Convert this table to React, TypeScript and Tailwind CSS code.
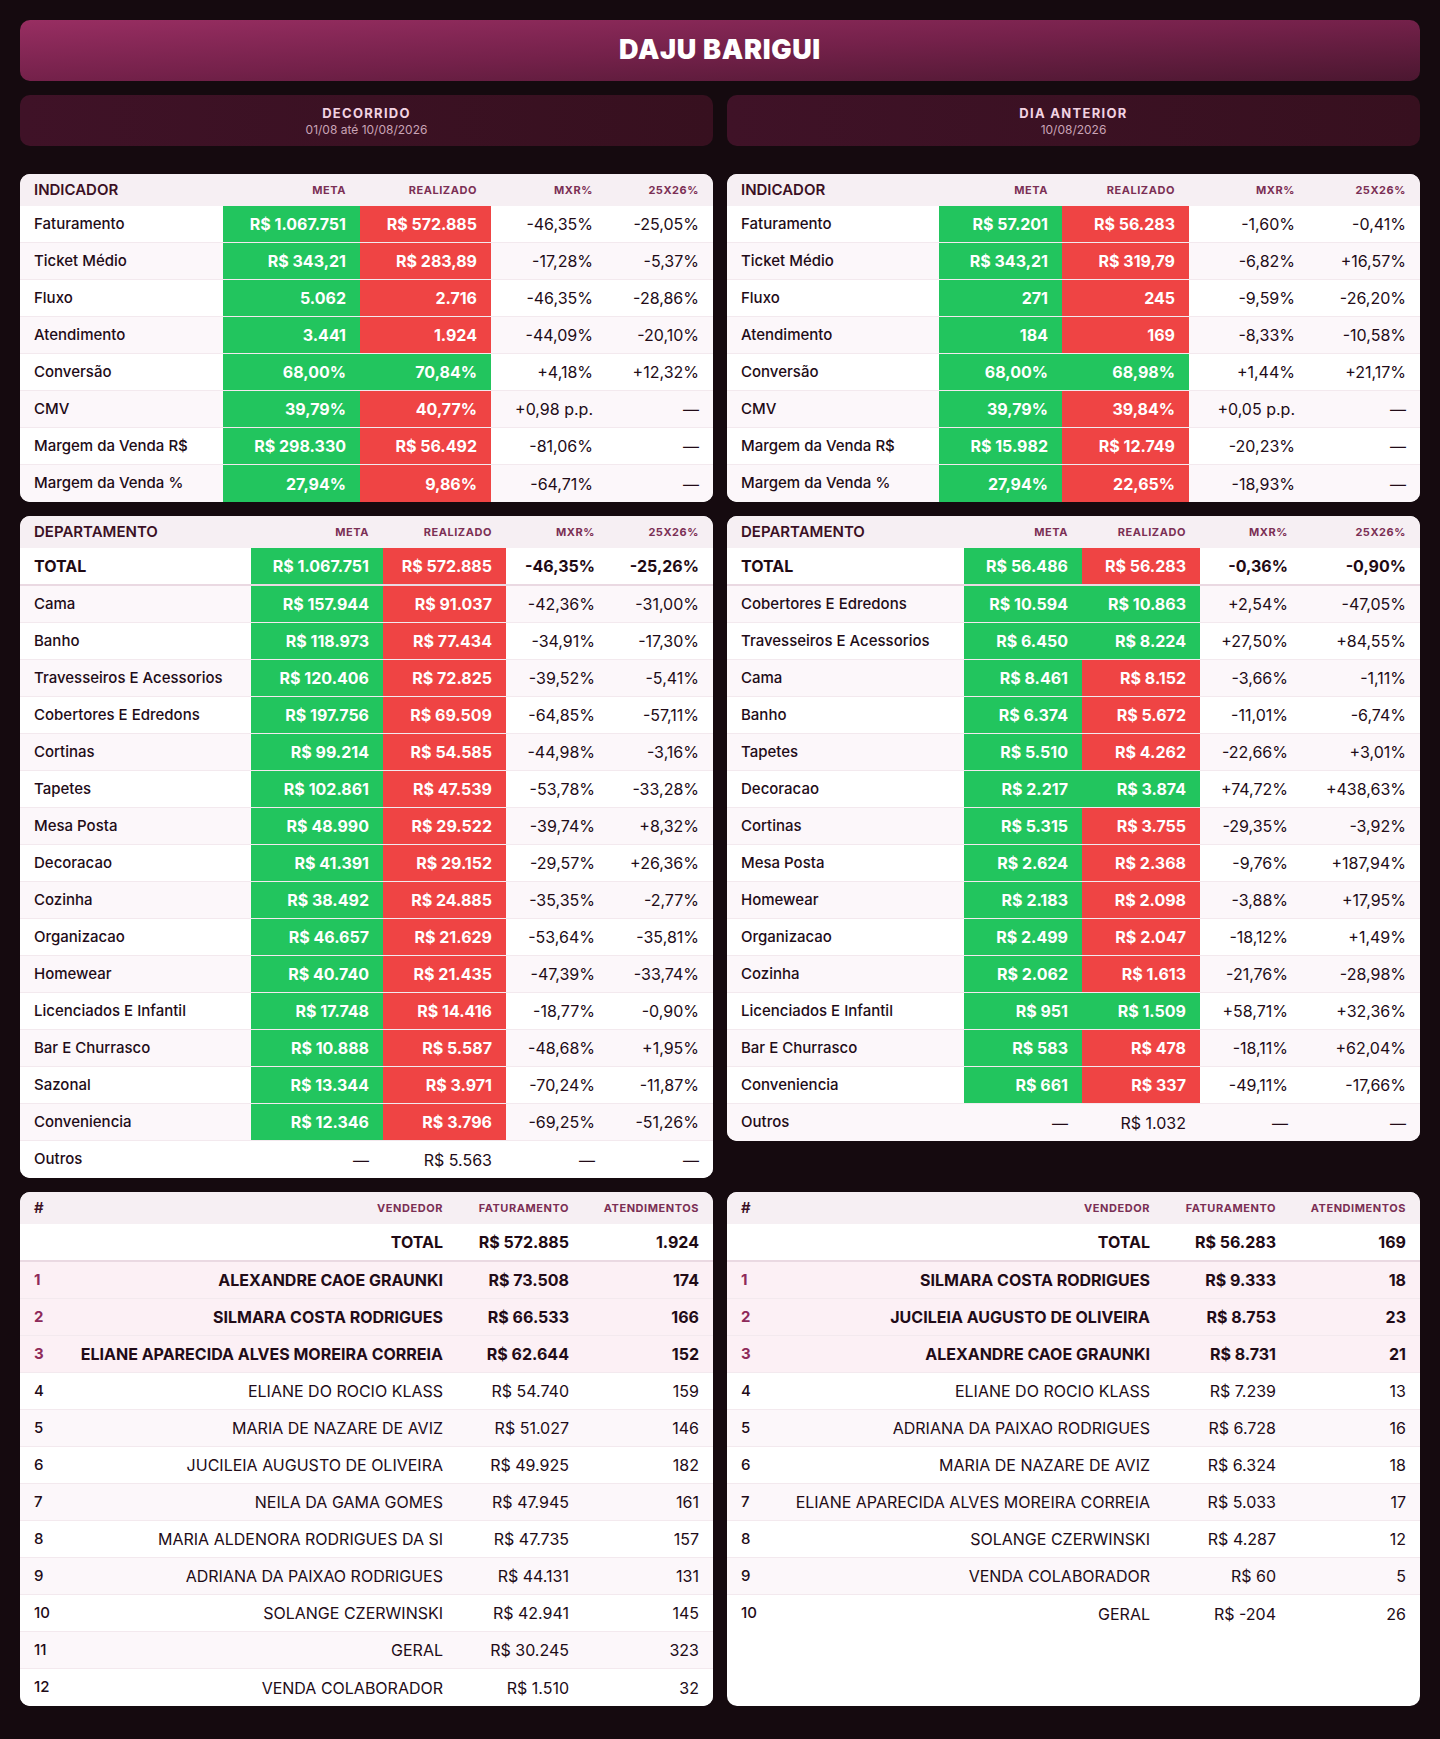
import React from 'react'

type Tone = 'g' | 'r' | null
type IndRow = { label: string; meta: string; metaTone: Tone; real: string; realTone: Tone; mxr: string; yoy: string }
type Seller = [string, string, string]

const ind = (label: string, meta: string, real: string, rt: Tone, mxr: string, yoy: string): IndRow => ({
  label,
  meta,
  metaTone: meta === '—' ? null : 'g',
  real,
  realTone: rt,
  mxr,
  yoy,
})

const leftIndicators: IndRow[] = [
  ind('Faturamento', 'R$ 1.067.751', 'R$ 572.885', 'r', '-46,35%', '-25,05%'),
  ind('Ticket Médio', 'R$ 343,21', 'R$ 283,89', 'r', '-17,28%', '-5,37%'),
  ind('Fluxo', '5.062', '2.716', 'r', '-46,35%', '-28,86%'),
  ind('Atendimento', '3.441', '1.924', 'r', '-44,09%', '-20,10%'),
  ind('Conversão', '68,00%', '70,84%', 'g', '+4,18%', '+12,32%'),
  ind('CMV', '39,79%', '40,77%', 'r', '+0,98 p.p.', '—'),
  ind('Margem da Venda R$', 'R$ 298.330', 'R$ 56.492', 'r', '-81,06%', '—'),
  ind('Margem da Venda %', '27,94%', '9,86%', 'r', '-64,71%', '—'),
]

const rightIndicators: IndRow[] = [
  ind('Faturamento', 'R$ 57.201', 'R$ 56.283', 'r', '-1,60%', '-0,41%'),
  ind('Ticket Médio', 'R$ 343,21', 'R$ 319,79', 'r', '-6,82%', '+16,57%'),
  ind('Fluxo', '271', '245', 'r', '-9,59%', '-26,20%'),
  ind('Atendimento', '184', '169', 'r', '-8,33%', '-10,58%'),
  ind('Conversão', '68,00%', '68,98%', 'g', '+1,44%', '+21,17%'),
  ind('CMV', '39,79%', '39,84%', 'r', '+0,05 p.p.', '—'),
  ind('Margem da Venda R$', 'R$ 15.982', 'R$ 12.749', 'r', '-20,23%', '—'),
  ind('Margem da Venda %', '27,94%', '22,65%', 'r', '-18,93%', '—'),
]

const leftDeps: IndRow[] = [
  ind('Cama', 'R$ 157.944', 'R$ 91.037', 'r', '-42,36%', '-31,00%'),
  ind('Banho', 'R$ 118.973', 'R$ 77.434', 'r', '-34,91%', '-17,30%'),
  ind('Travesseiros E Acessorios', 'R$ 120.406', 'R$ 72.825', 'r', '-39,52%', '-5,41%'),
  ind('Cobertores E Edredons', 'R$ 197.756', 'R$ 69.509', 'r', '-64,85%', '-57,11%'),
  ind('Cortinas', 'R$ 99.214', 'R$ 54.585', 'r', '-44,98%', '-3,16%'),
  ind('Tapetes', 'R$ 102.861', 'R$ 47.539', 'r', '-53,78%', '-33,28%'),
  ind('Mesa Posta', 'R$ 48.990', 'R$ 29.522', 'r', '-39,74%', '+8,32%'),
  ind('Decoracao', 'R$ 41.391', 'R$ 29.152', 'r', '-29,57%', '+26,36%'),
  ind('Cozinha', 'R$ 38.492', 'R$ 24.885', 'r', '-35,35%', '-2,77%'),
  ind('Organizacao', 'R$ 46.657', 'R$ 21.629', 'r', '-53,64%', '-35,81%'),
  ind('Homewear', 'R$ 40.740', 'R$ 21.435', 'r', '-47,39%', '-33,74%'),
  ind('Licenciados E Infantil', 'R$ 17.748', 'R$ 14.416', 'r', '-18,77%', '-0,90%'),
  ind('Bar E Churrasco', 'R$ 10.888', 'R$ 5.587', 'r', '-48,68%', '+1,95%'),
  ind('Sazonal', 'R$ 13.344', 'R$ 3.971', 'r', '-70,24%', '-11,87%'),
  ind('Conveniencia', 'R$ 12.346', 'R$ 3.796', 'r', '-69,25%', '-51,26%'),
  ind('Outros', '—', 'R$ 5.563', null, '—', '—'),
]

const rightDeps: IndRow[] = [
  ind('Cobertores E Edredons', 'R$ 10.594', 'R$ 10.863', 'g', '+2,54%', '-47,05%'),
  ind('Travesseiros E Acessorios', 'R$ 6.450', 'R$ 8.224', 'g', '+27,50%', '+84,55%'),
  ind('Cama', 'R$ 8.461', 'R$ 8.152', 'r', '-3,66%', '-1,11%'),
  ind('Banho', 'R$ 6.374', 'R$ 5.672', 'r', '-11,01%', '-6,74%'),
  ind('Tapetes', 'R$ 5.510', 'R$ 4.262', 'r', '-22,66%', '+3,01%'),
  ind('Decoracao', 'R$ 2.217', 'R$ 3.874', 'g', '+74,72%', '+438,63%'),
  ind('Cortinas', 'R$ 5.315', 'R$ 3.755', 'r', '-29,35%', '-3,92%'),
  ind('Mesa Posta', 'R$ 2.624', 'R$ 2.368', 'r', '-9,76%', '+187,94%'),
  ind('Homewear', 'R$ 2.183', 'R$ 2.098', 'r', '-3,88%', '+17,95%'),
  ind('Organizacao', 'R$ 2.499', 'R$ 2.047', 'r', '-18,12%', '+1,49%'),
  ind('Cozinha', 'R$ 2.062', 'R$ 1.613', 'r', '-21,76%', '-28,98%'),
  ind('Licenciados E Infantil', 'R$ 951', 'R$ 1.509', 'g', '+58,71%', '+32,36%'),
  ind('Bar E Churrasco', 'R$ 583', 'R$ 478', 'r', '-18,11%', '+62,04%'),
  ind('Conveniencia', 'R$ 661', 'R$ 337', 'r', '-49,11%', '-17,66%'),
  ind('Outros', '—', 'R$ 1.032', null, '—', '—'),
]

const leftSellers: Seller[] = [
  ['ALEXANDRE CAOE GRAUNKI', 'R$ 73.508', '174'],
  ['SILMARA COSTA RODRIGUES', 'R$ 66.533', '166'],
  ['ELIANE APARECIDA ALVES MOREIRA CORREIA', 'R$ 62.644', '152'],
  ['ELIANE DO ROCIO KLASS', 'R$ 54.740', '159'],
  ['MARIA DE NAZARE DE AVIZ', 'R$ 51.027', '146'],
  ['JUCILEIA AUGUSTO DE OLIVEIRA', 'R$ 49.925', '182'],
  ['NEILA DA GAMA GOMES', 'R$ 47.945', '161'],
  ['MARIA ALDENORA RODRIGUES DA SI', 'R$ 47.735', '157'],
  ['ADRIANA DA PAIXAO RODRIGUES', 'R$ 44.131', '131'],
  ['SOLANGE CZERWINSKI', 'R$ 42.941', '145'],
  ['GERAL', 'R$ 30.245', '323'],
  ['VENDA COLABORADOR', 'R$ 1.510', '32'],
]

const rightSellers: Seller[] = [
  ['SILMARA COSTA RODRIGUES', 'R$ 9.333', '18'],
  ['JUCILEIA AUGUSTO DE OLIVEIRA', 'R$ 8.753', '23'],
  ['ALEXANDRE CAOE GRAUNKI', 'R$ 8.731', '21'],
  ['ELIANE DO ROCIO KLASS', 'R$ 7.239', '13'],
  ['ADRIANA DA PAIXAO RODRIGUES', 'R$ 6.728', '16'],
  ['MARIA DE NAZARE DE AVIZ', 'R$ 6.324', '18'],
  ['ELIANE APARECIDA ALVES MOREIRA CORREIA', 'R$ 5.033', '17'],
  ['SOLANGE CZERWINSKI', 'R$ 4.287', '12'],
  ['VENDA COLABORADOR', 'R$ 60', '5'],
  ['GERAL', 'R$ -204', '26'],
]

const toneBg = (t: Tone) => (t === 'g' ? 'bg-[#22c55e] text-white font-bold' : t === 'r' ? 'bg-[#ef4444] text-white font-bold' : '')

const Card = ({ children, className = '' }: { children: React.ReactNode; className?: string }) => (
  <div className={`bg-white rounded-[10px] overflow-hidden ${className}`}>{children}</div>
)

const HeadCell = ({ children, first }: { children: React.ReactNode; first?: boolean }) =>
  first ? (
    <div className="px-[14px] flex items-center text-[15px] font-semibold text-[#3b0f24]">{children}</div>
  ) : (
    <div className="px-[14px] flex items-center justify-end text-[11px] font-bold tracking-wider text-[#7b2f55]">{children}</div>
  )

const MetricTable = ({
  title,
  cols,
  rows,
  total,
}: {
  title: string
  cols: string
  rows: IndRow[]
  total?: IndRow
}) => (
  <Card>
    <div className={`grid ${cols} h-[32px] bg-[#f6eff3]`}>
      <HeadCell first>{title}</HeadCell>
      <HeadCell>META</HeadCell>
      <HeadCell>REALIZADO</HeadCell>
      <HeadCell>MXR%</HeadCell>
      <HeadCell>25X26%</HeadCell>
    </div>
    {total && (
      <div className={`grid ${cols} h-[38px] border-b-2 border-[#ead9e2] text-[16px] font-bold text-[#1f0a14]`}>
        <div className="px-[14px] flex items-center">{total.label}</div>
        <div className={`px-[14px] flex items-center justify-end ${toneBg(total.metaTone)}`}>{total.meta}</div>
        <div className={`px-[14px] flex items-center justify-end ${toneBg(total.realTone)}`}>{total.real}</div>
        <div className="px-[14px] flex items-center justify-end">{total.mxr}</div>
        <div className="px-[14px] flex items-center justify-end">{total.yoy}</div>
      </div>
    )}
    {rows.map((r, i) => {
      const tinted = total ? i % 2 === 0 : i % 2 === 1
      return (
        <div
          key={r.label}
          className={`grid ${cols} h-[37px] text-[#220b17] ${tinted ? 'bg-[#fcf7fa]' : 'bg-white'} ${
            i < rows.length - 1 ? 'border-b border-[#f3e9ee]' : ''
          }`}
        >
          <div className="px-[14px] flex items-center text-[15px] font-medium">{r.label}</div>
          <div className={`px-[14px] flex items-center justify-end text-[16px] ${toneBg(r.metaTone)}`}>{r.meta}</div>
          <div className={`px-[14px] flex items-center justify-end text-[16px] ${toneBg(r.realTone)}`}>{r.real}</div>
          <div className="px-[14px] flex items-center justify-end text-[16px]">{r.mxr}</div>
          <div className="px-[14px] flex items-center justify-end text-[16px]">{r.yoy}</div>
        </div>
      )
    })}
  </Card>
)

const SellerTable = ({ total, sellers }: { total: Seller; sellers: Seller[] }) => {
  const cols = 'grid-cols-[44px_minmax(0,1fr)_126px_130px]'
  return (
    <Card className="h-full">
      <div className={`grid ${cols} h-[32px] bg-[#f6eff3]`}>
        <HeadCell first>#</HeadCell>
        <HeadCell>VENDEDOR</HeadCell>
        <HeadCell>FATURAMENTO</HeadCell>
        <HeadCell>ATENDIMENTOS</HeadCell>
      </div>
      <div className={`grid ${cols} h-[38px] border-b-2 border-[#ead9e2] text-[16px] font-bold text-[#1f0a14]`}>
        <div />
        <div className="px-[14px] flex items-center justify-end">{total[0]}</div>
        <div className="px-[14px] flex items-center justify-end">{total[1]}</div>
        <div className="px-[14px] flex items-center justify-end">{total[2]}</div>
      </div>
      {sellers.map((s, i) => {
        const top = i < 3
        const bg = top ? 'bg-[#fcf0f5]' : i % 2 === 0 ? 'bg-[#fcf7fa]' : 'bg-white'
        return (
          <div
            key={s[0]}
            className={`grid ${cols} h-[37px] text-[16px] text-[#220b17] ${bg} ${
              i < sellers.length - 1 ? 'border-b border-[#f3e9ee]' : ''
            }`}
          >
            <div className={`pl-[14px] flex items-center text-[15px] ${top ? 'font-bold text-[#8e2a5a]' : 'font-medium'}`}>{i + 1}</div>
            <div className={`pr-[14px] flex items-center justify-end whitespace-nowrap ${top ? 'font-bold' : ''}`}>{s[0]}</div>
            <div className={`px-[14px] flex items-center justify-end ${top ? 'font-bold' : ''}`}>{s[1]}</div>
            <div className={`px-[14px] flex items-center justify-end ${top ? 'font-bold' : ''}`}>{s[2]}</div>
          </div>
        )
      })}
    </Card>
  )
}

const PeriodBox = ({ title, date }: { title: string; date: string }) => (
  <div className="h-[51px] rounded-[10px] bg-gradient-to-r from-[#3f1227] to-[#37101f] flex flex-col items-center justify-center">
    <div className="text-[13px] font-bold tracking-widest text-[#f2d3e2] leading-[18px]">{title}</div>
    <div className="text-[12px] text-[#c9a3b6] leading-[16px]">{date}</div>
  </div>
)

export default function App() {
  return (
    <div className="min-h-[1739px] bg-[#150a0f] px-5 pt-5 pb-8 font-['Inter',sans-serif]">
      <div className="h-[61px] rounded-[10px] bg-gradient-to-br from-[#982e62] via-[#74214a] to-[#4b1730] flex items-center justify-center">
        <h1 className="text-[27px] font-black tracking-wide text-white">DAJU BARIGUI</h1>
      </div>

      <div className="mt-[14px] grid grid-cols-2 gap-[14px]">
        <PeriodBox title="DECORRIDO" date="01/08 até 10/08/2026" />
        <PeriodBox title="DIA ANTERIOR" date="10/08/2026" />
      </div>

      <div className="mt-[28px] grid grid-cols-2 gap-[14px] items-start">
        <MetricTable title="INDICADOR" cols="grid-cols-[203px_137px_131px_116px_1fr]" rows={leftIndicators} />
        <MetricTable title="INDICADOR" cols="grid-cols-[212px_123px_127px_120px_1fr]" rows={rightIndicators} />

        <MetricTable
          title="DEPARTAMENTO"
          cols="grid-cols-[231px_132px_123px_103px_1fr]"
          rows={leftDeps}
          total={ind('TOTAL', 'R$ 1.067.751', 'R$ 572.885', 'r', '-46,35%', '-25,26%')}
        />
        <MetricTable
          title="DEPARTAMENTO"
          cols="grid-cols-[237px_118px_118px_102px_1fr]"
          rows={rightDeps}
          total={ind('TOTAL', 'R$ 56.486', 'R$ 56.283', 'r', '-0,36%', '-0,90%')}
        />
      </div>

      <div className="mt-[14px] grid grid-cols-2 gap-[14px]">
        <SellerTable total={['TOTAL', 'R$ 572.885', '1.924']} sellers={leftSellers} />
        <SellerTable total={['TOTAL', 'R$ 56.283', '169']} sellers={rightSellers} />
      </div>
    </div>
  )
}
